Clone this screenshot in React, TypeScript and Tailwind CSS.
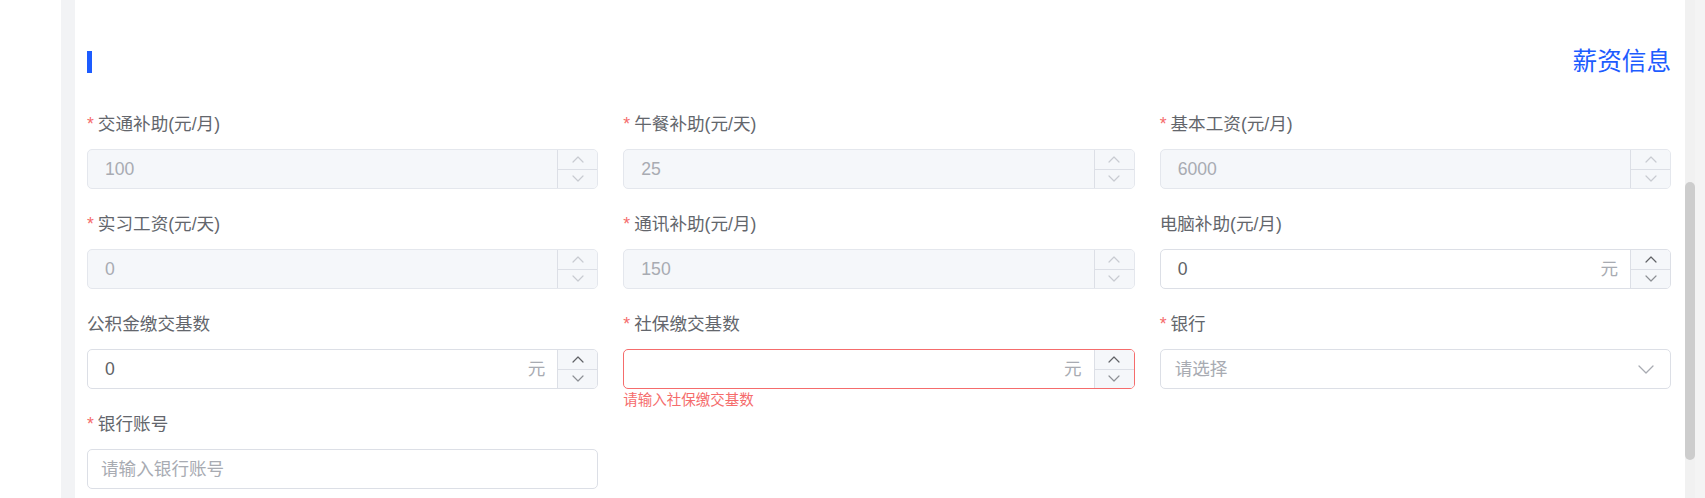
type Field = {
  label: string;
  required?: boolean;
  kind: 'number' | 'select' | 'text';
  value?: string;
  placeholder?: string;
  disabled?: boolean;
  suffix?: string;
  error?: string;
};

const fields: Field[] = [
  { label: '交通补助(元/月)', required: true, kind: 'number', value: '100', disabled: true },
  { label: '午餐补助(元/天)', required: true, kind: 'number', value: '25', disabled: true },
  { label: '基本工资(元/月)', required: true, kind: 'number', value: '6000', disabled: true },
  { label: '实习工资(元/天)', required: true, kind: 'number', value: '0', disabled: true },
  { label: '通讯补助(元/月)', required: true, kind: 'number', value: '150', disabled: true },
  { label: '电脑补助(元/月)', kind: 'number', value: '0', suffix: '元' },
  { label: '公积金缴交基数', kind: 'number', value: '0', suffix: '元' },
  { label: '社保缴交基数', required: true, kind: 'number', value: '', suffix: '元', error: '请输入社保缴交基数' },
  { label: '银行', required: true, kind: 'select', placeholder: '请选择' },
  { label: '银行账号', required: true, kind: 'text', placeholder: '请输入银行账号' },
];

function Arrow({ up, color }: { up?: boolean; color: string }) {
  return (
    <svg width="12" height="7" viewBox="0 0 12 7" fill="none">
      <polyline
        points={up ? '1,6 6,1 11,6' : '1,1 6,6 11,1'}
        stroke={color}
        strokeWidth="1.2"
        strokeLinecap="round"
        strokeLinejoin="round"
      />
    </svg>
  );
}

function NumberInput({ f }: { f: Field }) {
  const border = f.error ? 'border-[#f56c6c]' : f.disabled ? 'border-[#e4e7ed]' : 'border-[#dcdfe6]';
  const arrow = f.disabled ? '#c8cbd1' : '#606266';
  return (
    <div
      className={`flex h-[40px] items-stretch overflow-hidden rounded-[5px] border ${border} ${
        f.disabled ? 'bg-[#f5f7fa]' : 'bg-white'
      }`}
    >
      <div className="flex flex-1 items-center pl-[17px] pr-[12px]">
        <span className={`flex-1 text-[17.6px] ${f.disabled ? 'text-[#a8abb2]' : 'text-[#606266]'}`}>{f.value}</span>
        {f.suffix && <span className="text-[17.6px] text-[#a8abb2]">{f.suffix}</span>}
      </div>
      <div className="flex w-[40px] flex-col border-l border-[#dcdfe6] bg-[#f5f7fa]">
        <div className="flex flex-1 items-center justify-center border-b border-[#dcdfe6]">
          <Arrow up color={arrow} />
        </div>
        <div className="flex flex-1 items-center justify-center">
          <Arrow color={f.disabled ? '#c8cbd1' : '#8d9095'} />
        </div>
      </div>
    </div>
  );
}

function FormItem({ f }: { f: Field }) {
  return (
    <div className="flex h-[100px] flex-col">
      <div className="mb-[13px] flex h-[24px] items-center text-[17.6px] leading-[24px] text-[#63666c]">
        {f.required && <span className="mr-[4px] text-[#f56c6c]">*</span>}
        <span>{f.label}</span>
      </div>
      {f.kind === 'number' && <NumberInput f={f} />}
      {f.kind === 'select' && (
        <div className="flex h-[40px] items-center rounded-[5px] border border-[#dcdfe6] bg-white pl-[14px] pr-[16px]">
          <span className="flex-1 text-[17.6px] text-[#a8abb2]">{f.placeholder}</span>
          <svg width="16" height="9" viewBox="0 0 16 9" fill="none">
            <polyline points="1,1 8,8 15,1" stroke="#a8abb2" strokeWidth="1.3" strokeLinecap="round" strokeLinejoin="round" />
          </svg>
        </div>
      )}
      {f.kind === 'text' && (
        <div className="flex h-[40px] items-center rounded-[5px] border border-[#dcdfe6] bg-white pl-[13px]">
          <span className="text-[17.6px] text-[#a8abb2]">{f.placeholder}</span>
        </div>
      )}
      {f.error && <div className="pt-[1px] text-[14.5px] leading-[20px] text-[#f56c6c]">{f.error}</div>}
    </div>
  );
}

export default function App() {
  return (
    <div className="flex h-[498px] w-[1705px] overflow-hidden bg-white font-['Liberation_Sans','Noto_Sans_CJK_SC',sans-serif]">
      <div className="w-[61px] bg-white" />
      <div className="w-[14px] bg-[#f2f3f5]" />
      <main className="flex-1 bg-white pl-[12px] pr-[14px]">
        <div className="mt-[40px] flex h-[44px] items-center justify-between">
          <div className="h-[22px] w-[5px] bg-[#1d5cff]" />
          <h2 className="text-[24.6px] font-normal text-[#1d5cff]">薪资信息</h2>
        </div>
        <div className="mt-[28px] grid grid-cols-3 gap-x-[25px]">
          {fields.map((f) => (
            <FormItem key={f.label} f={f} />
          ))}
        </div>
      </main>
      <div className="flex w-[20px] bg-[#f1f1f1]">
        <div className="w-[10px] pt-[182px]">
          <div className="h-[278px] w-[10px] rounded-full bg-[#cdcdcd]" />
        </div>
        <div className="w-[10px] bg-[#f4f4f4]" />
      </div>
    </div>
  );
}
